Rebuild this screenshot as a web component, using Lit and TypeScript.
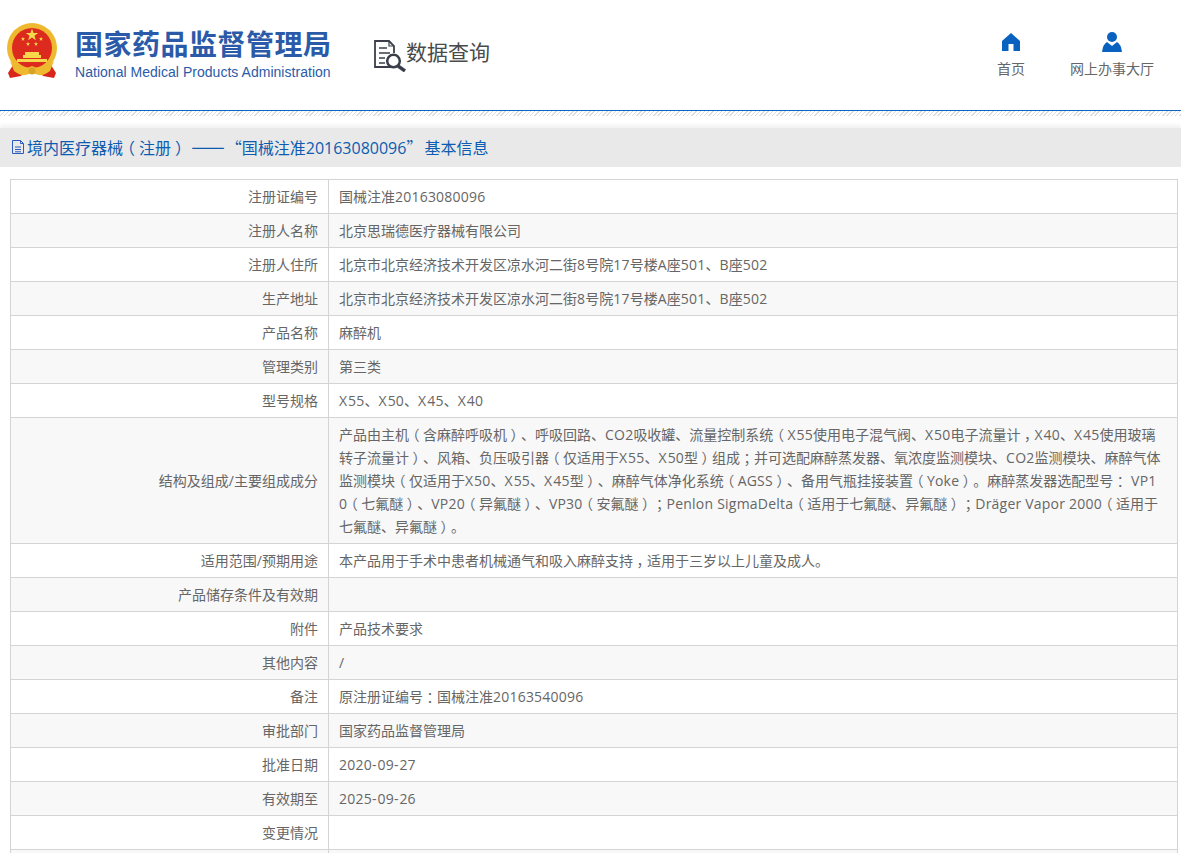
import { LitElement, html, css, svg } from "lit";
import { customElement } from "lit/decorators.js";

// Each value is a list of display lines, so no text run ever wraps.
const rows: [string, string[]][] = [
  ["注册证编号", ["国械注准20163080096"]],
  ["注册人名称", ["北京思瑞德医疗器械有限公司"]],
  ["注册人住所", ["北京市北京经济技术开发区凉水河二街8号院17号楼A座501、B座502"]],
  ["生产地址", ["北京市北京经济技术开发区凉水河二街8号院17号楼A座501、B座502"]],
  ["产品名称", ["麻醉机"]],
  ["管理类别", ["第三类"]],
  ["型号规格", ["X55、X50、X45、X40"]],
  ["结构及组成/主要组成成分", [
    "产品由主机（含麻醉呼吸机）、呼吸回路、CO2吸收罐、流量控制系统（X55使用电子混气阀、X50电子流量计，X40、X45使用玻璃",
    "转子流量计）、风箱、负压吸引器（仅适用于X55、X50型）组成；并可选配麻醉蒸发器、氧浓度监测模块、CO2监测模块、麻醉气体",
    "监测模块（仅适用于X50、X55、X45型）、麻醉气体净化系统（AGSS）、备用气瓶挂接装置（Yoke）。麻醉蒸发器选配型号： VP1",
    "0（七氟醚）、VP20（异氟醚）、VP30（安氟醚）；Penlon SigmaDelta（适用于七氟醚、异氟醚）；Dräger Vapor 2000（适用于",
    "七氟醚、异氟醚）。",
  ]],
  ["适用范围/预期用途", ["本产品用于手术中患者机械通气和吸入麻醉支持，适用于三岁以上儿童及成人。"]],
  ["产品储存条件及有效期", []],
  ["附件", ["产品技术要求"]],
  ["其他内容", ["/"]],
  ["备注", ["原注册证编号：国械注准20163540096"]],
  ["审批部门", ["国家药品监督管理局"]],
  ["批准日期", ["2020-09-27"]],
  ["有效期至", ["2025-09-26"]],
  ["变更情况", []],
  ["", []],
];

// Splits a string so Latin runs and centred punctuation can carry their own class.
const styled = (text: string) =>
  text.split(/([X\-]|[A-WYZa-zä0-9 .\/]+|[（），；：]|——|”)/).filter(Boolean).map((part) => {
    if ("（），；：".includes(part)) return html`<span class="mid">${part}</span>`;
    if (part === "——") return html`<span class="dash">${part}</span>`;
    if (part === "”") return html`<span class="cq">${part}</span>`;
    if (part === "X" || part === "-") return html`<span class="l w">${part}</span>`;
    if (/^[A-Za-zä0-9 .\/]+$/.test(part)) return html`<span class="l">${part}</span>`;
    return part;
  });

const star = (cx: number, cy: number, r: number) => {
  const p: string[] = [];
  for (let i = 0; i < 10; i++) {
    const a = -Math.PI / 2 + (i * Math.PI) / 5;
    const q = i % 2 ? r * 0.4 : r;
    p.push(`${(cx + q * Math.cos(a)).toFixed(2)},${(cy + q * Math.sin(a)).toFixed(2)}`);
  }
  return svg`<polygon points=${p.join(" ")} fill="#f7d84a"/>`;
};

@customElement("app-root")
export class AppRoot extends LitElement {
  static styles = css`
    :host {
      display: block;
      height: 853px;
      overflow: hidden;
      background: #fff;
      font-family: "Noto Sans CJK SC", sans-serif;
      font-size: 14px;
      color: #666;
      text-spacing-trim: space-all;
    }
    .l { font-family: "Open Sans", sans-serif; letter-spacing: 0.22px; }
    .w { letter-spacing: 1px; }
    .mid { font-feature-settings: "halt" 1; padding: 0 0.25em; }
    .dash { font-size: 1.25em; margin-right: 1px; }
    .cq { padding-right: 2px; }
    header {
      height: 111px;
      display: flex;
      align-items: flex-start;
      box-sizing: border-box;
      border-bottom: 1px solid #0a68c4;
    }
    .emblem { width: 52px; height: 56px; margin: 23px 0 0 6px; flex: none; }
    .org { margin: 25px 0 0 17px; width: 299px; flex: none; }
    .org-cn {
      font-size: 28px;
      letter-spacing: 0.5px;
      line-height: 36px;
      font-weight: 700;
      color: #2b5ba8;
      white-space: nowrap;
    }
    .org-en {
      font-family: "Liberation Sans", sans-serif;
      font-size: 14px;
      letter-spacing: 0.03px;
      line-height: 18px;
      margin-top: 2px;
      color: #2b5ba8;
      white-space: nowrap;
    }
    .query { display: flex; align-items: flex-start; margin-top: 40px; }
    .query svg { width: 33px; height: 32px; flex: none; }
    .query span {
      font-size: 21px;
      line-height: 22px;
      margin-left: -1px;
      color: #4a4a4a;
    }
    nav { margin-left: auto; display: flex; margin-top: 32px; margin-right: 27px; gap: 45px; }
    .nav-item { display: flex; flex-direction: column; align-items: center; color: #666; }
    .nav-item svg { width: 20px; height: 20px; display: block; }
    .nav-item span { margin-top: 6px; line-height: 20px; }
    .hatch {
      height: 5px;
      background: repeating-linear-gradient(135deg, #dcdcdc 0 1px, #fff 1px 3px);
    }
    .title {
      margin-top: 12px;
      height: 39px;
      box-sizing: border-box;
      padding: 0 0 2px 11px;
      background: #e9e9e9;
      box-shadow: 0 -3px 4px #f2f2f2;
      display: flex;
      align-items: center;
      color: #0d5cb0;
      font-size: 16px;
      line-height: 37px;
      white-space: pre;
    }
    .title .l { letter-spacing: 0; }
    .title svg { width: 16px; height: 16px; flex: none; }
    .wrap { padding: 12px 3px 0 10px; }
    table { width: 100%; border-collapse: collapse; table-layout: fixed; }
    td {
      border: 1px solid #d4d4d4;
      padding: 5px 10px;
      line-height: 23px;
      height: 23px;
      vertical-align: middle;
    }
    td.k { text-align: right; width: 297px; }
    .line { white-space: pre; }
    tr:nth-child(even) td { background: #f8f8f8; }
  `;

  render() {
    return html`
      <header>
        <svg class="emblem" viewBox="0 0 52 56">
          <path d="M7 42 L2 50 L4 55 L15 53 L20 47 Z M45 42 L50 50 L48 55 L37 53 L32 47 Z" fill="#d8261c"/>
          <circle cx="26" cy="25" r="25" fill="#eeb92f"/>
          <circle cx="26" cy="25" r="20" fill="#dc2a1e"/>
          ${star(26, 12, 6.5)}${star(17, 16, 2.2)}${star(35, 16, 2.2)}${star(22, 21, 2.2)}${star(30, 21, 2.2)}
          <path d="M19 29h14v3h2v3H17v-3h2zM11 36h30v3H11z" fill="#f7d84a"/>
          <path d="M4 38 Q15 49 26 43 Q37 49 48 38 L44 48 Q34 56 26 49 Q18 56 8 48 Z" fill="#eeb92f"/>
          <circle cx="26" cy="48" r="3.5" fill="#d9a425"/>
        </svg>
        <div class="org">
          <div class="org-cn">国家药品监督管理局</div>
          <div class="org-en">National Medical Products Administration</div>
        </div>
        <div class="query">
          <svg viewBox="0 0 33 32" fill="none" stroke="#3a3f4a">
            <path d="M17 27H1V1h14l5 5v7" stroke-width="1.8"/>
            <path d="M15 1v5h5" stroke-width="1.2"/>
            <path d="M5 8h8M5 13h11M5 18h6M5 23h6" stroke-width="1.7"/>
            <circle cx="19.5" cy="21" r="6.3" stroke-width="2.5"/>
            <path d="M24 26L31 31" stroke-width="3.4"/>
          </svg>
          <span>数据查询</span>
        </div>
        <nav>
          <div class="nav-item">
            <svg viewBox="0 0 20 20"><path fill="#0a62c0" d="M10 1L1 9v10h6.5v-7h5v7H19V9z"/></svg>
            <span>首页</span>
          </div>
          <div class="nav-item">
            <svg viewBox="0 0 20 20"><circle cx="10" cy="5" r="5" fill="#0a62c0"/><path fill="#0a62c0" d="M5 10 L10 14 L15 10 Q19 12 20 20 H0 Q1 12 5 10z"/></svg>
            <span>网上办事大厅</span>
          </div>
        </nav>
      </header>
      <div class="hatch"></div>
      <div class="title">
        <svg viewBox="0 0 16 16" fill="none" stroke="#2a5cc0" stroke-width="1"><path d="M1.5 1.5h8l3 3v10h-11zM9.5 1.5v3h3M4 8h6M4 10.5h6M4 12.8h6"/></svg>
        <span>${styled("境内医疗器械（注册） ——“国械注准20163080096”基本信息")}</span>
      </div>
      <div class="wrap">
        <table>
          <tbody>
            ${rows.map(([k, lines]) => html`<tr><td class="k">${styled(k)}</td><td>${lines.map((l) => html`<div class="line">${styled(l)}</div>`)}</td></tr>`)}
          </tbody>
        </table>
      </div>
    `;
  }
}
